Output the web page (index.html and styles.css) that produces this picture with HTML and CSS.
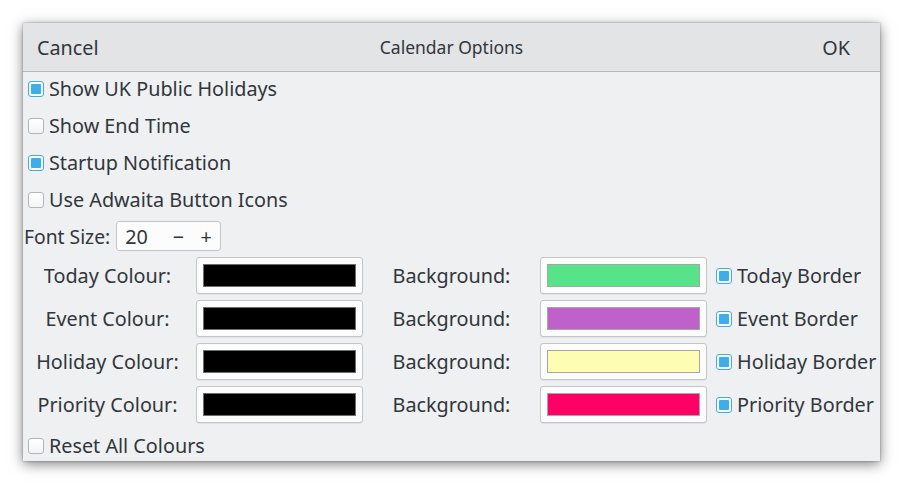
FILE: index.html
```html
<!DOCTYPE html>
<html>
<head>
<meta charset="utf-8">
<title>Calendar Options</title>
<link rel="stylesheet" href="styles.css">
</head>
<body>
<div class="window">
  <div class="header">
    <span class="hbtn cancel">Cancel</span>
    <span class="title">Calendar Options</span>
    <span class="hbtn ok">OK</span>
  </div>
  <div class="content">
    <label class="check-row"><span class="cb checked"></span><span>Show UK Public Holidays</span></label>
    <label class="check-row"><span class="cb"></span><span>Show End Time</span></label>
    <label class="check-row"><span class="cb checked"></span><span>Startup Notification</span></label>
    <label class="check-row"><span class="cb"></span><span>Use Adwaita Button Icons</span></label>
    <div class="font-row">
      <span class="font-label">Font Size:</span>
      <div class="spin"><span class="spin-val">20</span><span class="spin-btn">−</span><span class="spin-btn">+</span></div>
    </div>
    <div class="colour-grid">
      <span class="glabel">Today Colour:</span>
      <div class="cbtn"><span class="swatch black"></span></div>
      <span class="glabel">Background:</span>
      <div class="cbtn"><span class="swatch green"></span></div>
      <label class="gcheck"><span class="cb checked"></span><span>Today Border</span></label>

      <span class="glabel">Event Colour:</span>
      <div class="cbtn"><span class="swatch black"></span></div>
      <span class="glabel">Background:</span>
      <div class="cbtn"><span class="swatch purple"></span></div>
      <label class="gcheck"><span class="cb checked"></span><span>Event Border</span></label>

      <span class="glabel">Holiday Colour:</span>
      <div class="cbtn"><span class="swatch black"></span></div>
      <span class="glabel">Background:</span>
      <div class="cbtn"><span class="swatch yellow"></span></div>
      <label class="gcheck"><span class="cb checked"></span><span>Holiday Border</span></label>

      <span class="glabel">Priority Colour:</span>
      <div class="cbtn"><span class="swatch black"></span></div>
      <span class="glabel">Background:</span>
      <div class="cbtn"><span class="swatch pink"></span></div>
      <label class="gcheck"><span class="cb checked"></span><span>Priority Border</span></label>
    </div>
    <label class="check-row reset"><span class="cb"></span><span>Reset All Colours</span></label>
  </div>
</div>
</body>
</html>
```

FILE: styles.css
```css
* { box-sizing: border-box; }
html, body { margin: 0; padding: 0; background: #ffffff; }
body {
  font-family: "Noto Sans", "DejaVu Sans", sans-serif;
  color: #31363b;
  font-size: 19.8px;
  min-height: 484px;
  padding: 23px 0 0 23px;
}
.window {
  width: 857px;
  height: 438px;
  background: #eff0f1;
  box-shadow: 0 3px 12px rgba(0,0,0,0.5), 0 0 2px rgba(0,0,0,0.35);
  display: flex;
  flex-direction: column;
  overflow: hidden;
}
.header {
  height: 49px;
  flex: none;
  background: #e3e4e6;
  border-bottom: 1px solid #b8b9bb;
  display: grid;
  grid-template-columns: 1fr auto 1fr;
  align-items: center;
}
.hbtn { font-size: 19.8px; }
.cancel { justify-self: start; padding-left: 14px; }
.ok { justify-self: end; padding-right: 30px; }
.title { font-size: 17.5px; }
.content {
  padding-left: 1px;
  display: flex;
  flex-direction: column;
}
.check-row {
  height: 33px;
  display: flex;
  align-items: center;
  gap: 5px;
  padding-left: 4px;
}
.check-row + .check-row { margin-top: 4px; }
.cb {
  width: 16px;
  height: 16px;
  flex: none;
  border: 1px solid #b3b5b6;
  border-radius: 3px;
  background: linear-gradient(#ffffff, #f4f4f4);
  position: relative;
}
.cb.checked {
  border-color: #3daee9;
  background: #fcfcfc;
}
.cb.checked::after {
  content: "";
  position: absolute;
  left: 2px; top: 2px; right: 2px; bottom: 2px;
  background: #3daee9;
  border-radius: 1px;
}
.font-row {
  height: 32px;
  margin-top: 4px;
  display: flex;
  align-items: center;
  gap: 6px;
}
.font-label { font-size: 19.3px; }
.spin {
  width: 105px;
  height: 30px;
  border: 1px solid #c2c4c6;
  border-radius: 3px;
  background: #fcfcfc;
  display: flex;
  align-items: center;
  padding-left: 8px;
}
.spin-val { width: 42px; }
.spin-btn { width: 30px; text-align: center; font-size: 19.8px; }
.colour-grid {
  margin-top: 5px;
  display: grid;
  grid-template-columns: repeat(5, 167px);
  grid-auto-rows: 37px;
  column-gap: 5px;
  row-gap: 6px;
}
.glabel { justify-self: center; align-self: center; }
.cbtn {
  border: 1px solid #c3c5c7;
  border-radius: 3px;
  background: #fcfcfc;
  padding: 6px;
  display: flex;
  box-shadow: 0 1px 1px rgba(0,0,0,0.06);
}
.swatch {
  flex: 1;
  border: 1px solid #a5a5a5;
}
.swatch.black { background: #000000; border-color: #6e6e6e; }
.swatch.green { background: #57e389; }
.swatch.purple { background: #c061cb; }
.swatch.yellow { background: #fefdb4; }
.swatch.pink { background: #ff0066; }
.gcheck {
  display: flex;
  align-items: center;
  gap: 5px;
  padding-left: 4px;
  white-space: nowrap;
}
.check-row.reset { margin-top: 7px; height: 31px; }
```
